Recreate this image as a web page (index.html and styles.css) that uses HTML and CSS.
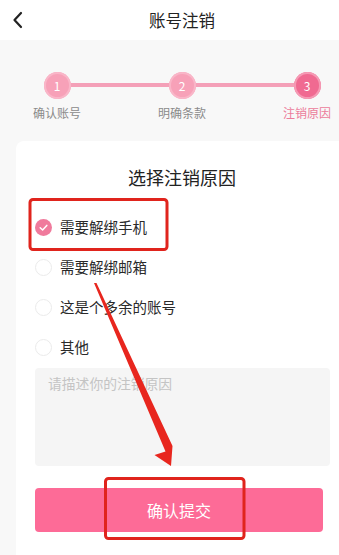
FILE: index.html
```html
<!DOCTYPE html>
<html lang="zh">
<head>
<meta charset="utf-8">
<link rel="stylesheet" href="styles.css">
</head>
<body>
<div class="page">
  <header class="topbar">
    <span class="back">
      <svg width="12" height="18" viewBox="0 0 12 18"><path d="M9 2 L2.5 9 L9 16" fill="none" stroke="#222" stroke-width="2.2" stroke-linecap="round" stroke-linejoin="round"/></svg>
    </span>
    <h1 class="title">账号注销</h1>
  </header>

  <section class="steps">
    <div class="track">
      <span class="dot">1</span>
      <span class="bar"></span>
      <span class="dot">2</span>
      <span class="bar"></span>
      <span class="dot dot-active">3</span>
    </div>
    <div class="labels">
      <span class="label">确认账号</span>
      <span class="label">明确条款</span>
      <span class="label label-active">注销原因</span>
    </div>
  </section>

  <main class="card">
    <h2 class="card-title">选择注销原因</h2>
    <ul class="options">
      <li class="option">
        <span class="radio radio-on">
          <svg width="17" height="17" viewBox="0 0 17 17"><path d="M5.2 8.8 L7.6 11 L11.8 6.4" fill="none" stroke="#fff" stroke-width="1.5" stroke-linecap="round" stroke-linejoin="round"/></svg>
        </span>
        <span class="option-text">需要解绑手机</span>
      </li>
      <li class="option"><span class="radio"></span><span class="option-text">需要解绑邮箱</span></li>
      <li class="option"><span class="radio"></span><span class="option-text">这是个多余的账号</span></li>
      <li class="option"><span class="radio"></span><span class="option-text">其他</span></li>
    </ul>
    <div class="reason">请描述你的注销原因</div>
    <button class="submit">确认提交</button>
  </main>

  <svg class="annot" width="339" height="555" viewBox="0 0 339 555">
    <rect x="30" y="199.5" width="137" height="50" rx="3" fill="none" stroke="#e0241d" stroke-width="3"/>
    <rect x="105.5" y="478.5" width="138.5" height="60" rx="3" fill="none" stroke="#e0241d" stroke-width="3"/>
    <polygon points="94,283 96.5,283 172.5,446 171,466 154.5,455 165.5,451.5" fill="#e8261e"/>
  </svg>
</div>
</body>
</html>
```

FILE: styles.css
```css
* { box-sizing: border-box; }
html, body { margin: 0; padding: 0; }
body {
  width: 339px;
  height: 555px;
  overflow: hidden;
  background: #f8f8f8;
  font-family: "Noto Sans CJK SC", "Noto Sans", sans-serif;
}
.page {
  position: relative;
  width: 339px;
  height: 555px;
  overflow: hidden;
  background: #f8f8f8;
}
.topbar {
  position: relative;
  height: 40px;
  background: #fff;
  display: flex;
  align-items: center;
  justify-content: center;
  padding-left: 25px;
}
.back {
  position: absolute;
  left: 12px;
  top: 11px;
  display: flex;
}
.title {
  margin: 0;
  font-size: 16.5px;
  font-weight: 400;
  color: #222;
  line-height: 24px;
}
.steps {
  padding-top: 31.5px;
}
.track {
  display: flex;
  align-items: center;
  margin-left: 43.5px;
  width: 277px;
}
.dot {
  width: 27px;
  height: 27px;
  border-radius: 50%;
  background: #f7a1b8;
  box-shadow: inset 0 0 0 2px #f9b6c8;
  color: #fff;
  font-size: 12px;
  display: flex;
  align-items: center;
  justify-content: center;
  flex: none;
}
.dot-active {
  background: #f06a91;
  box-shadow: inset 0 0 0 2px #f59ab4;
}
.bar {
  flex: 1;
  height: 4px;
  background: #f4a0b8;
}
.labels {
  display: flex;
  justify-content: space-between;
  margin-left: 27px;
  width: 310px;
  margin-top: 6.5px;
}
.label {
  width: 60px;
  text-align: center;
  font-size: 12px;
  line-height: 16px;
  color: #8a8a8a;
}
.label-active { color: #ec7c9b; }
.card {
  margin: 20px 0 0 16px;
  width: 323px;
  height: 420px;
  background: #fff;
  border-radius: 8px 0 0 0;
  padding: 24px 0 0 19px;
}
.card-title {
  margin: 0 0 0 -19px;
  padding-left: 9px;
  text-align: center;
  font-size: 18px;
  font-weight: 400;
  line-height: 24px;
  color: #222;
}
.options {
  list-style: none;
  margin: 18px 0 0;
  padding: 0;
}
.option {
  height: 40px;
  display: flex;
  align-items: center;
  gap: 8px;
}
.radio {
  width: 17px;
  height: 17px;
  border-radius: 50%;
  border: 1px solid #ebebeb;
  flex: none;
  display: flex;
}
.radio-on {
  border: none;
  background: #f07a9c;
}
.option-text {
  font-size: 14.5px;
  color: #2a2a2a;
  line-height: 20px;
}
.reason {
  margin-top: 1px;
  width: 295px;
  height: 98px;
  background: #f5f5f5;
  border-radius: 4px;
  padding: 5px 0 0 13px;
  font-size: 13.8px;
  line-height: 20px;
  color: #c4c4c4;
}
.submit {
  display: flex;
  align-items: center;
  justify-content: center;
  margin-top: 22px;
  width: 288px;
  height: 44px;
  border: none;
  border-radius: 4px;
  background: #fd6b97;
  color: #fff;
  font-family: inherit;
  font-size: 16px;
  padding: 0;
}
.annot {
  position: absolute;
  left: 0;
  top: 0;
  pointer-events: none;
}
```
